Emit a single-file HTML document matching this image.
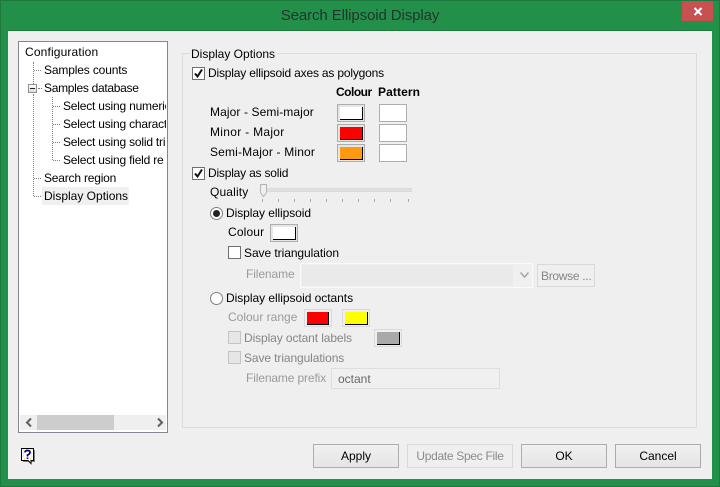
<!DOCTYPE html>
<html><head><meta charset="utf-8"><style>
html,body{margin:0;padding:0}
body{width:720px;height:487px;overflow:hidden;position:relative;background:#23904a;font-family:"Liberation Sans",sans-serif;font-size:12px;color:#000}
div,span.t{position:absolute;box-sizing:border-box}
.t{white-space:nowrap;line-height:16px;height:16px}
.d{color:#9a9a9a}
.cb{width:13px;height:13px;border:1px solid #707070;background:#fff}
.cb.x{background:#e6e6e6;border-color:#c4c4c4}
.cb svg{position:absolute;left:0;top:0}
.rd{width:13px;height:13px;border:1px solid #808080;border-radius:50%;background:#fff}
.rd i{position:absolute;left:2px;top:2px;width:7px;height:7px;border-radius:50%;background:#222}
.sw{width:28px;height:18px;border:1px solid #adadad;background:#e6e6e6}
.sw i{position:absolute;left:2px;top:2px;width:23px;height:13px;border-right:1px solid #000;border-bottom:1px solid #000;box-sizing:border-box}
.sw.d2{border-color:#d9d9d9;background:#efefef}
.btn{top:444px;height:24px;border:1px solid #acacac;background:linear-gradient(#f0f0f0,#e5e5e5);text-align:center;line-height:22px}
.h{border-top:1px dotted #808080;height:1px}
.v{border-left:1px dotted #808080;width:1px}
.tick{top:199px;width:1px;height:3px;background:#a8a8a8}
</style></head><body>
<div style="left:0;top:0;width:720px;height:487px;border:1px solid #1c7a3e"></div>
<div class="t" style="left:0;width:720px;top:7px;height:18px;line-height:18px;text-align:center;font-size:15px;letter-spacing:-.1px;color:#23352b">Search Ellipsoid Display</div>
<div style="left:682px;top:1px;width:31px;height:20px;background:#c75050"></div>
<svg style="position:absolute;left:693px;top:7px" width="10" height="9"><path d="M1.5 1 L8.5 8 M8.5 1 L1.5 8" stroke="#fff" stroke-width="2" fill="none"/></svg>
<div style="left:8px;top:30px;width:704px;height:449px;background:#efefef;border-top:1px solid #1c7a3e"></div>

<!-- tree -->
<div style="left:18px;top:41px;width:150px;height:392px;background:#fff;border:1px solid #828790"></div>
<div style="left:42px;top:187px;width:87px;height:18px;background:#f0f0f0"></div>
<div class="v" style="left:33px;top:62px;height:22px"></div>
<div class="v" style="left:33px;top:94px;height:102px"></div>
<div class="h" style="left:34px;top:70px;width:7px"></div>
<div class="h" style="left:38px;top:88px;width:4px"></div>
<div class="h" style="left:34px;top:178px;width:7px"></div>
<div class="h" style="left:34px;top:196px;width:7px"></div>
<div class="v" style="left:52px;top:97px;height:63px"></div>
<div class="h" style="left:53px;top:106px;width:7px"></div>
<div class="h" style="left:53px;top:124px;width:7px"></div>
<div class="h" style="left:53px;top:142px;width:7px"></div>
<div class="h" style="left:53px;top:160px;width:7px"></div>
<div style="left:28px;top:84px;width:9px;height:9px;border:1px solid #919191;background:linear-gradient(#fff,#dcdcdc)"></div>
<div style="left:30px;top:88px;width:5px;height:1px;background:#223"></div>
<div class="t" style="left:25px;top:44px;letter-spacing:.15px">Configuration</div>
<div class="t" style="left:44px;top:62px;letter-spacing:-.15px">Samples counts</div>
<div class="t" style="left:44px;top:80px;letter-spacing:-.3px">Samples database</div>
<div style="left:63px;top:97px;width:103px;height:72px;overflow:hidden">
<div class="t" style="left:0;top:1px;letter-spacing:-.2px">Select using numeric</div>
<div class="t" style="left:0;top:19px;letter-spacing:-.2px">Select using character</div>
<div class="t" style="left:0;top:37px;letter-spacing:-.2px">Select using solid tri</div>
<div class="t" style="left:0;top:55px;letter-spacing:-.2px">Select using field re</div>
</div>
<div class="t" style="left:44px;top:170px;letter-spacing:-.2px">Search region</div>
<div class="t" style="left:44px;top:188px">Display Options</div>
<div style="left:20px;top:415px;width:146px;height:15px;background:#efefef"></div>
<div style="left:37px;top:415px;width:77px;height:15px;background:#cdcdcd"></div>
<svg style="position:absolute;left:24px;top:417px" width="140" height="11"><path d="M7 1.5 L3 5.5 L7 9.5 M134 1.5 L138 5.5 L134 9.5" stroke="#606060" stroke-width="2" fill="none"/></svg>

<!-- group -->
<div style="left:182px;top:53px;width:515px;height:375px;border:1px solid #dcdcdc"></div>
<div class="t" style="left:190px;top:46px;background:#efefef;padding:0 2px 0 1px">Display Options</div>

<div class="cb" style="left:192px;top:67px"><svg width="11" height="11"><path d="M2 5.5 L4.5 8.5 L9 1.5" stroke="#111" stroke-width="2" fill="none"/></svg></div>
<div class="t" style="left:208px;top:65px;letter-spacing:-.18px">Display ellipsoid axes as polygons</div>
<div class="t" style="left:336px;top:84px;font-weight:bold;letter-spacing:-.5px">Colour</div>
<div class="t" style="left:378px;top:84px;font-weight:bold;letter-spacing:.1px">Pattern</div>
<div class="t" style="left:210px;top:104px;letter-spacing:.1px">Major - Semi-major</div>
<div class="t" style="left:210px;top:124px;letter-spacing:.3px">Minor - Major</div>
<div class="t" style="left:210px;top:144px;letter-spacing:.17px">Semi-Major - Minor</div>
<div class="sw" style="left:337px;top:104px"><i style="background:#fff"></i></div>
<div class="sw" style="left:337px;top:124px"><i style="background:#f00"></i></div>
<div class="sw" style="left:337px;top:144px"><i style="background:#ff9a10"></i></div>
<div class="sw" style="left:379px;top:104px;background:#fff"></div>
<div class="sw" style="left:379px;top:124px;background:#fff"></div>
<div class="sw" style="left:379px;top:144px;background:#fff"></div>

<div class="cb" style="left:192px;top:167px"><svg width="11" height="11"><path d="M2 5.5 L4.5 8.5 L9 1.5" stroke="#111" stroke-width="2" fill="none"/></svg></div>
<div class="t" style="left:208px;top:165px;letter-spacing:-.2px">Display as solid</div>
<div class="t" style="left:210px;top:184px;letter-spacing:.15px">Quality</div>
<div style="left:260px;top:188px;width:152px;height:4px;background:#e0e0e0;border:1px solid #dadada"></div>
<svg style="position:absolute;left:259px;top:184px" width="9" height="14"><path d="M1.5 .5 H7.5 V8.5 L4.5 12.5 L1.5 8.5 Z" fill="#efefef" stroke="#b4b4b4"/></svg>
<div class="tick" style="left:262px"></div><div class="tick" style="left:278px"></div><div class="tick" style="left:294px"></div><div class="tick" style="left:310px"></div><div class="tick" style="left:326px"></div><div class="tick" style="left:342px"></div><div class="tick" style="left:358px"></div><div class="tick" style="left:374px"></div><div class="tick" style="left:390px"></div><div class="tick" style="left:408px"></div>

<div class="rd" style="left:210px;top:207px"><i></i></div>
<div class="t" style="left:226px;top:205px;letter-spacing:-.06px">Display ellipsoid</div>
<div class="t" style="left:228px;top:224px;letter-spacing:.15px">Colour</div>
<div class="sw" style="left:270px;top:224px"><i style="background:#fff"></i></div>
<div class="cb" style="left:228px;top:246px"></div>
<div class="t" style="left:244px;top:245px;letter-spacing:-.06px">Save triangulation</div>
<div class="t d" style="left:246px;top:266px;letter-spacing:-.1px">Filename</div>
<div style="left:300px;top:263px;width:233px;height:25px;background:#f0f0f0;border:1px solid #fafafa"></div>
<div style="left:302px;top:265px;width:211px;height:21px;background:#eaeaea"></div>
<svg style="position:absolute;left:519px;top:271px" width="12" height="9"><path d="M1.5 1.5 L5.5 6 L9.5 1.5" stroke="#a8a8a8" stroke-width="1.6" fill="none"/></svg>
<div style="left:537px;top:264px;width:58px;height:23px;border:1px solid #d9d9d9;background:#efefef"></div>
<div class="t" style="left:541px;top:268px;color:#858585;letter-spacing:-.3px">Browse ...</div>

<div class="rd" style="left:210px;top:292px"></div>
<div class="t" style="left:226px;top:290px;letter-spacing:-.04px">Display ellipsoid octants</div>
<div class="t d" style="left:228px;top:309px">Colour range</div>
<div class="sw d2" style="left:304px;top:309px"><i style="background:#f00;width:22px"></i></div>
<div class="sw d2" style="left:342px;top:309px"><i style="background:#ff0"></i></div>
<div class="cb x" style="left:228px;top:331px"></div>
<div class="t d" style="left:244px;top:330px;color:#858585;letter-spacing:-.1px">Display octant labels</div>
<div class="sw d2" style="left:374px;top:329px"><i style="background:#a9a9a9"></i></div>
<div class="cb x" style="left:228px;top:351px"></div>
<div class="t d" style="left:244px;top:350px;color:#858585;letter-spacing:-.1px">Save triangulations</div>
<div class="t d" style="left:246px;top:370px;letter-spacing:-.13px">Filename prefix</div>
<div style="left:331px;top:368px;width:169px;height:21px;border:1px solid #dedede;background:#f0f0f0"></div>
<div class="t" style="left:338px;top:371px;color:#666">octant</div>

<!-- help -->
<svg style="position:absolute;left:20px;top:447px" width="17" height="18">
<path d="M3 3 H15 V15 H3 Z" fill="#808080"/>
<path d="M1.5 1.5 H13.5 V13.5 H11 V16.5 L8 13.5 H1.5 Z" fill="#fff" stroke="#000"/>
<path d="M3 3 h1 M6 3 h1 M10 3 h1 M3 6 h1 M3 9 h1 M11 6 h1 M11 9 h1 M4 12 h1 M10 12 h1" stroke="#e6d800"/>
<path d="M5 5.5 Q5 3.5 7.5 3.5 Q10 3.5 10 5.5 Q10 7 7.5 8 V9.5 M7.5 10.5 V12" stroke="#000080" stroke-width="1.7" fill="none"/>
</svg>

<!-- buttons -->
<div class="btn" style="left:313px;width:86px">Apply</div>
<div class="btn" style="left:407px;width:106px;border-color:#d9d9d9;background:#efefef;color:#8a8a8a;letter-spacing:-.3px">Update Spec File</div>
<div class="btn" style="left:521px;width:86px">OK</div>
<div class="btn" style="left:615px;width:86px">Cancel</div>
</body></html>
